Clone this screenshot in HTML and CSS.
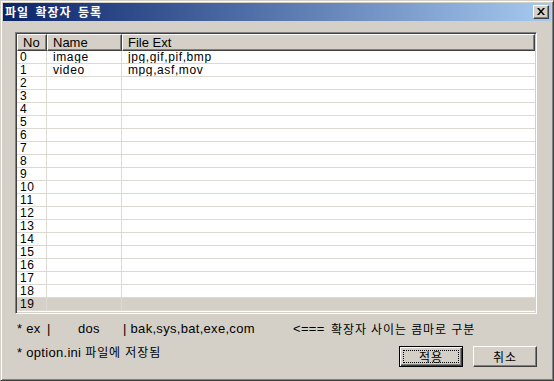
FILE: index.html
```html
<!DOCTYPE html>
<html lang="ko">
<head>
<meta charset="utf-8">
<title>파일 확장자 등록</title>
<link rel="stylesheet" href="styles.css">
</head>
<body>
<div class="window">
  <div class="titlebar">
    <span class="title">파일 확장자 등록</span>
    <button class="close" type="button" aria-label="닫기">
      <svg width="8" height="7" viewBox="0 0 8 7"><path d="M0 0h2l2 2.5L6 0h2L5 3.5 8 7H6L4 4.5 2 7H0l3-3.5z" fill="#000"/></svg>
    </button>
  </div>
  <div class="client">
    <div class="listview">
      <div class="lv-head">
        <div class="th">No</div>
        <div class="th">Name</div>
        <div class="th">File Ext</div>
      </div>
      <div class="lv-body">
        <div class="lv-row"><div class="td no">0</div><div class="td">image</div><div class="td">jpg,gif,pif,bmp</div></div>
        <div class="lv-row"><div class="td no">1</div><div class="td">video</div><div class="td">mpg,asf,mov</div></div>
        <div class="lv-row"><div class="td no">2</div><div class="td"></div><div class="td"></div></div>
        <div class="lv-row"><div class="td no">3</div><div class="td"></div><div class="td"></div></div>
        <div class="lv-row"><div class="td no">4</div><div class="td"></div><div class="td"></div></div>
        <div class="lv-row"><div class="td no">5</div><div class="td"></div><div class="td"></div></div>
        <div class="lv-row"><div class="td no">6</div><div class="td"></div><div class="td"></div></div>
        <div class="lv-row"><div class="td no">7</div><div class="td"></div><div class="td"></div></div>
        <div class="lv-row"><div class="td no">8</div><div class="td"></div><div class="td"></div></div>
        <div class="lv-row"><div class="td no">9</div><div class="td"></div><div class="td"></div></div>
        <div class="lv-row"><div class="td no">10</div><div class="td"></div><div class="td"></div></div>
        <div class="lv-row"><div class="td no">11</div><div class="td"></div><div class="td"></div></div>
        <div class="lv-row"><div class="td no">12</div><div class="td"></div><div class="td"></div></div>
        <div class="lv-row"><div class="td no">13</div><div class="td"></div><div class="td"></div></div>
        <div class="lv-row"><div class="td no">14</div><div class="td"></div><div class="td"></div></div>
        <div class="lv-row"><div class="td no">15</div><div class="td"></div><div class="td"></div></div>
        <div class="lv-row"><div class="td no">16</div><div class="td"></div><div class="td"></div></div>
        <div class="lv-row"><div class="td no">17</div><div class="td"></div><div class="td"></div></div>
        <div class="lv-row"><div class="td no">18</div><div class="td"></div><div class="td"></div></div>
        <div class="lv-row selected"><div class="td no">19</div><div class="td"></div><div class="td"></div></div>
      </div>
    </div>
    <div class="hint">
      <span class="h-ex">* ex</span><span class="h-bar">|</span><span class="h-dos">dos</span><span class="h-ext">| bak,sys,bat,exe,com</span><span class="h-arrow">&lt;===</span><span class="h-ko">확장자 사이는 콤마로 구분</span>
    </div>
    <div class="bottom">
      <div class="note">* option.ini <span class="ko">파일에 저장됨</span></div>
      <div class="buttons">
        <button class="btn default" type="button"><span class="focus">적용</span></button>
        <button class="btn" type="button"><span class="label">취소</span></button>
      </div>
    </div>
  </div>
</div>
</body>
</html>
```

FILE: styles.css
```css
* { box-sizing: border-box; }
html, body { margin: 0; padding: 0; }
body {
  width: 554px;
  height: 381px;
  background: #d4d0c8;
  font-family: "Liberation Sans", "Noto Sans CJK KR", sans-serif;
  font-size: 12px;
  color: #000;
}
.window {
  width: 554px;
  height: 381px;
  background: #d4d0c8;
  border: 1px solid;
  border-color: #d4d0c8 #404040 #404040 #d4d0c8;
  box-shadow: inset 1px 1px #fff, inset -1px -1px #808080;
  padding: 2px;
  display: flex;
  flex-direction: column;
}
.titlebar {
  height: 18px;
  background: linear-gradient(to right, #0a246a, #a6caf0);
  display: flex;
  align-items: center;
  padding: 0 2px 0 2px;
}
.title {
  color: #fff;
  font-family: "Noto Sans CJK KR", sans-serif;
  font-weight: bold;
  font-size: 12px;
  letter-spacing: 1px;
  word-spacing: 2px;
  line-height: 18px;
  flex: 1;
}
.close {
  width: 16px;
  height: 14px;
  padding: 0;
  margin: 0;
  background: #d4d0c8;
  border: 1px solid;
  border-color: #fff #404040 #404040 #fff;
  box-shadow: inset -1px -1px #808080;
  display: flex;
  align-items: center;
  justify-content: center;
}
.close svg { display: block; margin: 0 1px 1px 0; }
.client {
  flex: 1;
  padding: 11px 14px 0 12px;
  display: flex;
  flex-direction: column;
}
.listview {
  width: 522px;
  height: 282px;
  border: 1px solid;
  border-color: #808080 #fff #fff #808080;
  box-shadow: inset 1px 1px #404040, inset -1px -1px #d4d0c8;
  padding: 1px;
  background: #fff;
  overflow: hidden;
}
.lv-head, .lv-row {
  display: grid;
  grid-template-columns: 30px 75px 1fr;
}
.th {
  height: 17px;
  background: #d4d0c8;
  border: 1px solid;
  border-color: #fff #404040 #404040 #fff;
  box-shadow: inset -1px -1px #808080;
  padding-left: 5px;
  line-height: 15px;
  font-family: "Liberation Sans", sans-serif;
  font-size: 13px;
  white-space: nowrap;
}
.lv-row { height: 13px; }
.td {
  height: 13px;
  border-right: 1px solid #dcd9d3;
  border-bottom: 1px solid #dcd9d3;
  padding-left: 6px;
  line-height: 12px;
  font-size: 12px;
  letter-spacing: 0.6px;
  white-space: nowrap;
  overflow: hidden;
}
.td.no { padding-left: 3px; }
.td:last-child { border-right: 0; }
.lv-row.selected { background: #d4d0c8; }
.hint {
  margin-top: 8px;
  padding-left: 2px;
  height: 14px;
  line-height: 14px;
  font-size: 13px;
  letter-spacing: 0.3px;
  display: flex;
  white-space: nowrap;
}
.h-ex { width: 30px; }
.h-bar { width: 31px; }
.h-dos { width: 45px; }
.h-ext { width: 170px; }
.h-arrow { width: 38px; }
.h-ko, .ko {
  font-family: "Noto Sans CJK KR", sans-serif;
  font-size: 12px;
  letter-spacing: 0.9px;
}
.bottom {
  margin-top: 10px;
  display: flex;
  align-items: flex-start;
  padding-left: 2px;
}
.note {
  flex: 1;
  line-height: 14px;
  margin-top: -1px;
  font-size: 13px;
  letter-spacing: 0.3px;
  white-space: nowrap;
}
.buttons {
  display: flex;
  gap: 10px;
}
.btn {
  width: 64px;
  height: 21px;
  padding: 0;
  margin: 0;
  background: #d4d0c8;
  border: 1px solid;
  border-color: #fff #404040 #404040 #fff;
  box-shadow: inset -1px -1px #808080;
  font-family: "Noto Sans CJK KR", sans-serif;
  font-size: 12px;
  letter-spacing: 1px;
  color: #000;
  display: flex;
  align-items: center;
  justify-content: center;
}
.btn.default {
  border: 1px solid #000;
  box-shadow: inset 1px 1px #fff, inset -1px -1px #404040, inset -2px -2px #808080;
  padding: 3px;
}
.focus {
  flex: 1;
  align-self: stretch;
  border: 1px dotted #000;
  display: flex;
  align-items: center;
  justify-content: center;
  line-height: 11px;
}
.label { line-height: 14px; }
```
